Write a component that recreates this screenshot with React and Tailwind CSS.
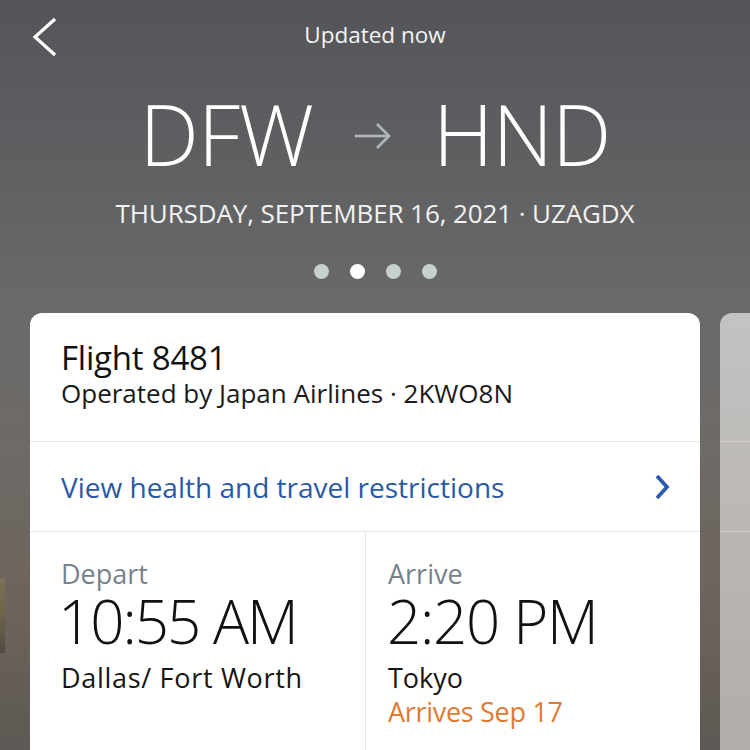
import React from "react";

const F = { fontFamily: '"Open Sans", "Noto Sans", sans-serif' };

export default function App() {
  return (
    <div
      className="relative w-[750px] h-[750px] overflow-hidden bg-[linear-gradient(180deg,#545559_0%,#5e5f61_20%,#6a6a6a_42%,#6e6a66_60%,#6d645c_80%,#5e5954_100%)] text-white"
      style={F}
    >
      {/* left edge photo hint */}
      <div className="absolute left-0 top-[578px] w-[5px] h-[75px] bg-[linear-gradient(180deg,#8a7d52,#6d6236,#3a3630)] opacity-50" />

      {/* header */}
      <div className="grid grid-cols-[1fr_auto_1fr] items-center pt-[16px] h-[58px]">
        <div className="pl-[30px]">
          <svg width="30" height="42" viewBox="0 0 30 42" className="block">
            <polyline points="25,3 5,21 25,39" fill="none" stroke="#fff" strokeWidth="3.2" strokeLinecap="butt" strokeLinejoin="miter" />
          </svg>
        </div>
        <div className="text-[22.5px] leading-none text-[#f4f4f4] pb-[3px]">Updated now</div>
        <div />
      </div>

      {/* route */}
      <div className="flex items-center justify-center mt-[36px] h-[80px] font-light text-[84px] leading-none tracking-[-1px]">
        <span>DFW</span>
        <svg width="40" height="30" viewBox="0 0 40 30" className="mx-[40px] mt-[4px]">
          <line x1="2" y1="15" x2="36" y2="15" stroke="#b4b8bb" strokeWidth="2.5" />
          <polyline points="24,3 36,15 24,27" fill="none" stroke="#b4b8bb" strokeWidth="2.5" />
        </svg>
        <span>HND</span>
      </div>

      <div className="mt-[26px] text-center text-[26px] leading-none tracking-[-0.1px] text-[#f2f2f2]">
        THURSDAY, SEPTEMBER 16, 2021 · UZAGDX
      </div>

      {/* dots */}
      <div className="flex justify-center gap-[21px] mt-[38px]">
        <span className="w-[15px] h-[15px] rounded-full bg-[#c7d2d0]" />
        <span className="w-[15px] h-[15px] rounded-full bg-white" />
        <span className="w-[15px] h-[15px] rounded-full bg-[#c7d2d0]" />
        <span className="w-[15px] h-[15px] rounded-full bg-[#c7d2d0]" />
      </div>

      {/* cards */}
      <div className="flex gap-[20px] pl-[30px] mt-[34px]">
        <div className="w-[670px] shrink-0 h-[500px] rounded-[12px] bg-white text-[#111]">
          <div className="px-[31px] pt-[26px] h-[129px] border-b border-[#e6e6e6]">
            <div className="text-[33px] leading-[37px] tracking-[-0.2px]">Flight 8481</div>
            <div className="text-[26px] leading-[34px] text-[#1a1a1a]">Operated by Japan Airlines · 2KWO8N</div>
          </div>
          <div className="flex items-center justify-between pl-[31px] pr-[30px] h-[90px] border-b border-[#e6e6e6]">
            <span className="text-[28px] leading-none text-[#2a5aa6]">View health and travel restrictions</span>
            <svg width="16" height="26" viewBox="0 0 16 26">
              <polyline points="3,2 13,13 3,24" fill="none" stroke="#2b5cae" strokeWidth="3.8" />
            </svg>
          </div>
          <div className="grid grid-cols-[336px_1fr] h-[220px]">
            <div className="border-r border-[#e6e6e6] pl-[31px] pt-[26px]">
              <div className="text-[27px] leading-[32px] text-[#76828c]">Depart</div>
              <div className="text-[60px] leading-[62px] font-light tracking-[-2px] -ml-[3px]">10:55 AM</div>
              <div className="mt-[10px] text-[27px] leading-[32px] tracking-[0.7px] text-[#151515]">Dallas/ Fort Worth</div>
            </div>
            <div className="pl-[22px] pt-[26px]">
              <div className="text-[27px] leading-[32px] text-[#76828c]">Arrive</div>
              <div className="text-[60px] leading-[62px] font-light tracking-[-1.3px] -ml-[1px]">2:20 PM</div>
              <div className="mt-[10px] text-[27px] leading-[32px] text-[#151515]">Tokyo</div>
              <div className="mt-[1px] text-[27px] leading-[34px] tracking-[-0.3px] text-[#e07a33]">Arrives Sep 17</div>
            </div>
          </div>
        </div>
        <div className="w-[670px] shrink-0 h-[500px] rounded-[12px] bg-[linear-gradient(180deg,#c3c3c2,#b9b5b1_50%,#aeaba8)]">
          <div className="h-[129px] border-b border-[#d2d0ce]" />
          <div className="h-[90px] border-b border-[#d2d0ce]" />
        </div>
      </div>
    </div>
  );
}
